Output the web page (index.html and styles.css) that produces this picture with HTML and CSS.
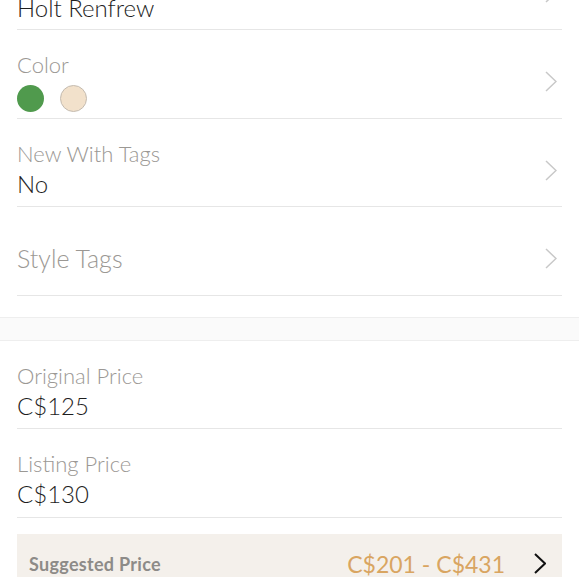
FILE: index.html
```html
<!DOCTYPE html>
<html lang="en">
    <head>
        <meta charset="UTF-8" />
        <meta name="viewport" content="width=device-width, initial-scale=1.0" />
        <title>Listing Details</title>
        <link rel="stylesheet" href="styles.css">
    </head>
    <body>
        <div class="list">
            <div class="row first">
                <div class="field field-top">
                    <div class="value">Holt Renfrew</div>
                </div>
                <svg class="chevron" viewBox="0 0 12 21"><path d="M1 1 L11 10.5 L1 20" /></svg>
            </div>
            <div class="row">
                <div class="field">
                    <div class="label">Color</div>
                    <div class="swatches">
                        <span class="swatch green"></span>
                        <span class="swatch beige"></span>
                    </div>
                </div>
                <svg class="chevron" viewBox="0 0 12 21"><path d="M1 1 L11 10.5 L1 20" /></svg>
            </div>
            <div class="row short">
                <div class="field">
                    <div class="label">New With Tags</div>
                    <div class="value">No</div>
                </div>
                <svg class="chevron" viewBox="0 0 12 21"><path d="M1 1 L11 10.5 L1 20" /></svg>
            </div>
            <div class="row">
                <div class="field field-single">
                    <div class="placeholder">Style Tags</div>
                </div>
                <svg class="chevron" viewBox="0 0 12 21"><path d="M1 1 L11 10.5 L1 20" /></svg>
            </div>
        </div>

        <div class="band"></div>

        <div class="list">
            <div class="row short">
                <div class="field">
                    <div class="label">Original Price</div>
                    <div class="value">C$125</div>
                </div>
            </div>
            <div class="row">
                <div class="field">
                    <div class="label">Listing Price</div>
                    <div class="value">C$130</div>
                </div>
            </div>
        </div>

        <div class="suggested">
            <span class="suggested-label">Suggested Price</span>
            <span class="suggested-range">C$201 - C$431</span>
            <svg class="chevron dark" viewBox="0 0 12 21"><path d="M1 1 L11 10.5 L1 20" /></svg>
        </div>
    </body>
</html>
```

FILE: styles.css
```css
body {
    margin: 0;
    font-family: Lato, "Liberation Sans", sans-serif;
    background: #fff;
    overflow: hidden;
}
.list {
    padding: 0 17px;
}
.row {
    display: flex;
    align-items: flex-start;
    height: 88px;
    border-bottom: 1px solid #e6e6e6;
}
.row.short {
    height: 87px;
}
.row.first {
    margin-top: -59px;
}
.field {
    flex: 1;
    padding-top: 22px;
}
.field-top {
    padding-top: 52px;
}
.field-single {
    padding-top: 36px;
}
.label {
    font-size: 22px;
    line-height: 26px;
    color: #9b9894;
    font-weight: 300;
}
.value {
    margin-top: 2px;
    font-size: 24px;
    line-height: 30px;
    color: #1e1e1e;
    font-weight: 300;
}
.field-top .value {
    margin-top: 0;
}
.placeholder {
    font-size: 25px;
    line-height: 30px;
    color: #9b9894;
    font-weight: 300;
}
.swatches {
    display: flex;
    gap: 16px;
    margin-top: 7px;
}
.swatch {
    width: 27px;
    height: 27px;
    border-radius: 50%;
    box-sizing: border-box;
}
.green {
    background: #509a4d;
}
.beige {
    background: #f2e1cb;
    border: 1px solid #c4bbb0;
}
.chevron {
    width: 12px;
    height: 21px;
    margin-top: 41px;
    margin-right: 5px;
    fill: none;
    stroke: #c8c8c8;
    stroke-width: 1.5;
}
.band {
    margin-top: 21px;
    height: 22px;
    background: #fafafa;
    border-top: 1px solid #eeeeee;
    border-bottom: 1px solid #eeeeee;
}
.suggested {
    display: flex;
    align-items: center;
    box-sizing: border-box;
    height: 43px;
    margin: 16px 17px 0;
    padding: 16px 16px 0 12px;
    background: #f4f0eb;
}
.suggested-label {
    flex: 1;
    font-size: 18px;
    font-weight: 700;
    color: #8d8b88;
    letter-spacing: 0.3px;
}
.suggested-range {
    font-size: 23px;
    color: #d9a561;
    margin-right: 29px;
}
.chevron.dark {
    margin: 0;
    stroke: #111;
    stroke-width: 2;
}
```
